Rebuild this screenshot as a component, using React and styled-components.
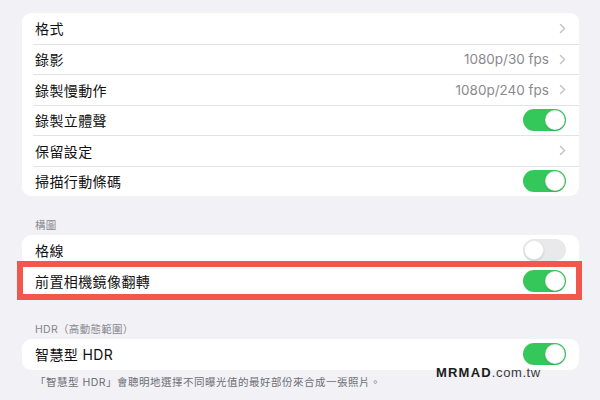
import React from "react";
import styled, { createGlobalStyle } from "styled-components";

const Global = createGlobalStyle`
  html, body { margin: 0; padding: 0; background: #f1f1f6; }
  body { width: 600px; height: 400px; overflow: hidden; font-family: Inter, "Noto Sans CJK TC", sans-serif; }
`;

const Page = styled.div`
  position: relative;
  width: 600px;
  height: 400px;
  box-sizing: border-box;
  padding: 13px 21px 0 22px;
  display: flex;
  flex-direction: column;
`;

const Section = styled.section`
  display: flex;
  flex-direction: column;
  margin-top: ${(p) => p.$top || 0}px;
`;

const Header = styled.div`
  font-size: 10.5px;
  line-height: 14px;
  color: #88888d;
  padding: 0 0 ${(p) => p.$gap ?? 2}px 13px;
  letter-spacing: 0.3px;
`;

const Card = styled.div`
  background: #fff;
  border-radius: 9px;
  display: flex;
  flex-direction: column;
`;

const Row = styled.div`
  position: relative;
  height: ${(p) => p.$h || 30.5}px;
  padding-left: 11px;
  display: flex;
`;

const RowInner = styled.div`
  flex: 1;
  display: flex;
  align-items: center;
  padding: 0 13px 0 2px;
  border-top: ${(p) => (p.$first ? "none" : "1px solid #e3e3e7")};
`;

const Label = styled.span`
  flex: 1;
  font-size: 14px;
  color: #111;
  letter-spacing: 0.4px;
`;

const Value = styled.span`
  font-size: 13.5px;
  color: #8a8a8e;
  margin-right: 10px;
`;

const Track = styled.div`
  width: 43px;
  height: 22px;
  border-radius: 11px;
  background: ${(p) => (p.$on ? "#34c759" : "#e9e9eb")};
  display: flex;
  align-items: center;
  justify-content: ${(p) => (p.$on ? "flex-end" : "flex-start")};
  padding: 0 1px;
  box-sizing: border-box;
`;

const Knob = styled.div`
  width: 20px;
  height: 20px;
  border-radius: 50%;
  background: #fff;
  box-sizing: border-box;
  border: 0.5px solid rgba(0, 0, 0, 0.08);
  box-shadow: 0 1px 2px rgba(0, 0, 0, 0.15);
`;

const Highlight = styled.div`
  position: absolute;
  left: -5px;
  right: -3px;
  top: -4.5px;
  bottom: -4px;
  border: 6px solid #f2574c;
  pointer-events: none;
`;

const Footer = styled.div`
  font-size: 10.5px;
  line-height: 15px;
  color: #6e6e73;
  padding: 5px 0 0 13px;
  letter-spacing: 0.5px;
`;

const Watermark = styled.div`
  position: absolute;
  left: 436px;
  top: 366px;
  font-family: "Liberation Sans", Arial, sans-serif;
  font-size: 13px;
  line-height: 14px;
  color: #1b1b1b;
`;

const WBold = styled.span`
  font-weight: 900;
  letter-spacing: 1.2px;
`;

const WLight = styled.span`
  color: #3a3a3a;
  letter-spacing: 0.6px;
`;

const Chevron = () => (
  <svg width="7" height="11" viewBox="0 0 7 11">
    <path d="M1.5 1.5 L5.5 5.5 L1.5 9.5" fill="none" stroke="#c4c4c8" strokeWidth="1.5" strokeLinecap="round" strokeLinejoin="round" />
  </svg>
);

const Toggle = ({ on }) => (
  <Track $on={on}>
    <Knob />
  </Track>
);

const Item = ({ label, value, chevron, toggle, first, h, highlight }) => (
  <Row $h={h}>
    <RowInner $first={first}>
      <Label>{label}</Label>
      {value && <Value>{value}</Value>}
      {chevron && <Chevron />}
      {toggle !== undefined && <Toggle on={toggle} />}
    </RowInner>
    {highlight && <Highlight />}
  </Row>
);

export default function App() {
  return (
    <>
      <Global />
      <Page>
        <Section>
          <Card>
            <Item first label="格式" chevron />
            <Item label="錄影" value="1080p/30 fps" chevron />
            <Item label="錄製慢動作" value="1080p/240 fps" chevron />
            <Item label="錄製立體聲" toggle={true} />
            <Item label="保留設定" chevron />
            <Item label="掃描行動條碼" toggle={true} />
          </Card>
        </Section>
        <Section $top={23}>
          <Header $gap={2}>構圖</Header>
          <Card>
            <Item first label="格線" toggle={false} />
            <Item first label="前置相機鏡像翻轉" toggle={true} highlight />
          </Card>
        </Section>
        <Section $top={27}>
          <Header $gap={2}>HDR（高動態範圍）</Header>
          <Card>
            <Item first label="智慧型 HDR" toggle={true} />
          </Card>
          <Footer>「智慧型 HDR」會聰明地選擇不同曝光值的最好部份來合成一張照片。</Footer>
        </Section>
        <Watermark>
          <WBold>MRMAD</WBold>
          <WLight>.com.tw</WLight>
        </Watermark>
      </Page>
    </>
  );
}
